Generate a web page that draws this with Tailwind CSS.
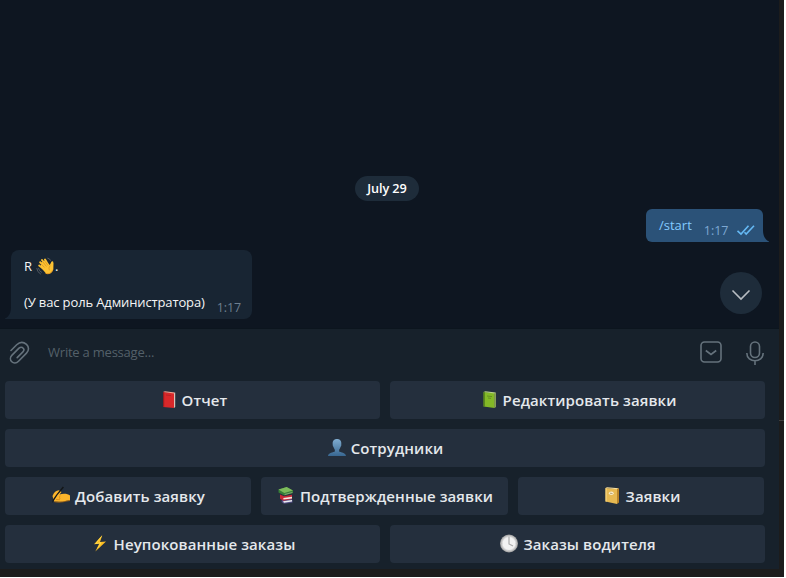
<!DOCTYPE html>
<html lang="ru">
<head>
<meta charset="utf-8">
<title>Chat</title>
<script src="https://cdn.jsdelivr.net/npm/@tailwindcss/browser@4"></script>
</head>
<body class="h-[578px] w-[786px] overflow-hidden bg-white font-['Open_Sans','Noto_Sans',sans-serif]">
<div class="relative h-[577px] w-[784px] bg-[#1c1c1c]">
  <div class="absolute top-[420px] right-0 h-px w-[5px] bg-[#3f3f3f]"></div>
  <div class="flex h-[569px] w-[779px] flex-col bg-[#17212b]">
    <main class="relative flex h-[328px] flex-none flex-col bg-[#0e1621] pt-[176px] text-[13px] text-[#f5f5f5]">
      <div class="ml-[355px] flex h-[25px] w-16 items-center justify-center rounded-full bg-[#1e2c3a] text-[12.7px] font-semibold tracking-[-0.1px] text-white">July 29</div>
      <div class="relative mt-2 ml-[646px] flex h-[33px] w-[117px] rounded-md rounded-br-none bg-[#2b5278] pl-[13px]">
        <span class="mt-[7px] leading-[18px] text-[#83caff]">/start</span>
        <span class="mt-[13px] ml-[12px] text-[12.5px] leading-[18px] text-[#7da8d3]">1:17</span>
        <svg class="absolute top-[15px] left-[90px]" width="19" height="12" fill="none" stroke="#65b9f4" stroke-width="1.6"><path d="M1.5 6.8 5 10 12.5 1.8M8.5 8.2 10.2 10 18 1.8"/></svg>
        <svg class="absolute bottom-0 -right-[6px]" width="6" height="12" fill="#2b5278"><path d="M0 0C0 6 2 9.5 6 11.5V12H0Z"/></svg>
      </div>
      <div class="relative mt-2 ml-[11px] h-[69px] w-[241px] rounded-lg rounded-bl-none bg-[#182533] px-[13px] pt-[7px] leading-[18px]">
        <svg class="absolute bottom-0 -left-[6px]" width="6" height="12" fill="#182533"><path d="M6 0C6 6 4 9.5 0 11.5V12H6Z"/></svg>
        <div class="flex h-9">
          <span class="w-3">R</span>
          <svg class="h-[19px] w-[19px]" viewBox="0 0 19 19" fill="none" stroke-linecap="round">
            <path d="M5 10.5 10 16.5Q15 18 17 13L17.3 6 15.3 5 13.8 8 8.5 3.5 5 6Z" fill="#fcc233"/>
            <path d="M9.5 11 4.2 5.3M11 9.5 6 3M12.5 8.5 9 2.6M9 13 3.2 8.5M16.3 5.2V12" stroke="#fcc233" stroke-width="2"/>
            <path d="M8.3 10.2 5 6.8M10.2 9.2 7 5M11.8 8.2 9.3 4.8M14 8.8Q12 11 13.2 13" stroke="#ce8818" stroke-width=".6"/>
            <path d="M10 16.5Q14.5 18 16.8 13" stroke="#e99b20" stroke-width="1"/>
            <path d="M11.8 1.2Q14 1.5 14.5 3.4M.8 11.5Q1 15 4.5 17M2.5 11.5Q3 14 5.5 15.3" stroke="#596066" stroke-width=".9"/>
          </svg><span>.</span>
        </div>
        <div class="flex tracking-[-0.13px] whitespace-nowrap"><span>(У вас роль Администратора)</span></div>
        <span class="absolute right-[11px] bottom-[2px] text-[12.5px] tracking-[-0.1px] text-[#6d7f8f]">1:17</span>
      </div>
      <div class="absolute top-[272px] left-[720px] flex size-[42px] items-center justify-center rounded-full bg-[#1e2c3a]">
        <svg class="mt-[3px]" width="20" height="12" fill="none" stroke="#b8bdc2" stroke-width="1.6"><path d="m1.5 1.5 8.5 8.5 8.5-8.5"/></svg>
      </div>
    </main>
    <div class="flex h-[53px] flex-none items-center border-t border-[#0c151e] pl-[8px] text-[#65727c]">
      <svg class="mt-[-4px]" width="22" height="24" fill="none" stroke="currentColor" stroke-width="1.6" stroke-linecap="round"><path d="M3 9.5 8.7 3.8C12 .6 15.8 1 18.5 3.4 21.2 6 21.1 9.5 18.5 12.1L10.5 20.2C8.2 22.5 5.5 22.5 3.8 20.8 2 19 2.1 16.2 3.8 14.4L11 7.2C12.5 5.8 14.2 6 15.2 7.2 16.3 8.4 16 9.8 14.9 10.9L9.2 16.6"/></svg>
      <span class="mt-[-5px] ml-[18px] w-[652px] text-[13px] tracking-[-0.22px] text-[#546069]">Write a message...</span>
      <svg class="mt-[-6px]" width="22" height="22" fill="none" stroke="currentColor" stroke-width="1.6"><rect x="1" y="1" width="20" height="20" rx="3.5"/><path d="m5.8 9.5 5.2 4 5.2-4"/></svg>
      <svg class="mt-[-4px] ml-[24px]" width="20" height="24" fill="none" stroke="currentColor" stroke-width="1.6"><rect x="4.5" y="1" width="9" height="15.5" rx="4.5"/><path d="M.8 12C.8 22.3 17.2 22.3 17.2 12M9 19.8V24"/></svg>
    </div>
    <div class="flex flex-col gap-[10px] pl-[5px] text-[15px] font-semibold tracking-[0.1px] whitespace-nowrap text-[#e4e8ec] *:flex *:h-[38px] *:gap-[10px]">
      <div class="*:flex *:w-[375px] *:items-center *:justify-center *:gap-1 *:rounded *:bg-[#242f3d]">
        <div><svg class="size-5" viewBox="0 0 20 20"><path d="m5 2 11 1.1V18L5 17Z" fill="#d9282a"/><path d="m5 2 2-.7 10 1.2-1 .9Z" fill="#f3a08f"/><path d="M16 3.2 17.2 2.5V17L16 18Z" fill="#d9c4b9"/><path d="M5 2 6.2 2.3V17L5 16.8Z" fill="#991c20"/><path d="m8 5 5 .6" stroke="#ad2024" stroke-width=".7"/></svg><span>Отчет</span></div>
        <div><svg class="size-5" viewBox="0 0 20 20"><path d="m4.5 2 11 1.1V18L4.5 16.4Z" fill="#83b827"/><path d="m4.5 2 2-.7 10.3 1.2-1.3.9Z" fill="#bad389"/><path d="M15.5 3.2 16.8 2.5V17L15.5 18Z" fill="#a3bb63"/><path d="M4.5 2 5.7 2.3V16.7L4.5 16.4Z" fill="#49721c"/><path d="m8 6 5 .6M9 8l3 .4" stroke="#587e20" stroke-width=".7"/></svg><span>Редактировать заявки</span></div>
      </div>
      <div class="*:flex *:w-[760px] *:items-center *:justify-center *:gap-1 *:rounded *:bg-[#242f3d]">
        <div><svg class="size-5" viewBox="0 0 20 20"><defs><linearGradient id="person" x1="0" y1="0" x2="0" y2="1"><stop stop-color="#80acd0"/><stop offset="1" stop-color="#386791"/></linearGradient></defs><path d="M10 1C6.8 1 5.4 3.2 5.7 6.2 5.5 7.5 6.2 8.3 6.5 9 7 10.7 7.7 11.3 7.9 12L7.7 13.7C4 14.7 1.4 15.2 1 18H19C18.6 15.2 16 14.7 12.3 13.7L12.1 12C12.5 11 13 10.7 13.5 9 14.2 8.1 14.5 7.2 14.3 6.2 14.6 3.2 13.2 1 10 1Z" fill="url(#person)"/></svg><span>Сотрудники</span></div>
      </div>
      <div class="*:flex *:w-[246px] *:items-center *:justify-center *:gap-1 *:rounded *:bg-[#242f3d]">
        <div><svg class="size-5" viewBox="0 0 20 20"><path d="M1.5 10C3 6 5 4.3 8 4.2L10.5 6 8.5 8.5C13 7.2 17 8 19 9.5V14.5C15 14 12.5 16.2 9 15.8L3 15.4Z" fill="#fcb52b"/><path d="M9 13Q8 11.5 9 9.5M5 13.5 9 13.7" stroke="#c97b13" stroke-width=".6" fill="none"/><path d="M3.5 15.8Q8 17 12 15.8L19 14.5" stroke="#a9660e" stroke-width=".7" fill="none"/><path d="M11.8.6 13 1.4 6.5 9 3 14.5 1.2 17 1.6 14 5.2 8.8Z" fill="#141719"/></svg><span>Добавить заявку</span></div>
        <div class="!w-[247px]"><svg class="size-5" viewBox="0 0 20 20"><path d="M6 13.5 15 12 16.5 14.5V16.5L8 17.8 5.5 16Z" fill="#514e87"/><path d="m7 15.3 9-1.2v1.4l-8 1.2Z" fill="#ececf0"/><path d="M4 8.5 8 10.3 16 8.8V13L7.5 14.7 4 12.7Z" fill="#c92937"/><path d="m7.3 11.9 8.7-1.2V12.4l-8.5 1.2Z" fill="#f5e6df"/><path d="m2.5 3.5 8.2-2.5L17 4.7V7L8.3 9.5 2.5 6.5Z" fill="#377d38"/><path d="m2.5 3.5 8.2-2.5L17 4.5 8.3 7Z" fill="#7dbb5b"/><path d="m8.5 8 7.8-2V7.1l-7.5 2Z" fill="#7fa773"/></svg><span>Подтвержденные заявки</span></div>
        <div><svg class="size-5" viewBox="0 0 20 20"><path d="m3.5 2 11.5 1V18L3.5 15.6Z" fill="#e6b952"/><path d="m3.5 2 1.5-.7 12 1-2 .9Z" fill="#f9df9c"/><path d="M15 3 17 2.3V16.5L15 18Z" fill="#b98429"/><path d="m3.5 2 1.2.2v13.5L3.5 15.6Z" fill="#f5d37e"/><ellipse cx="9.3" cy="7.3" rx="2.4" ry="1.7" fill="#f8edcd"/><path d="m8 7.2 2.5.3" stroke="#a38a56" stroke-width=".8"/></svg><span>Заявки</span></div>
      </div>
      <div class="*:flex *:w-[375px] *:items-center *:justify-center *:gap-1 *:rounded *:bg-[#242f3d]">
        <div><svg class="size-5" viewBox="0 0 20 20"><path d="M12.3 1 4 10.3 9.2 9.7 5.3 17.4 16 7.5 10 8.1Z" fill="#fcbd23"/><path d="m11.5 2.5-5.7 7 5.2-.8-3.2 5.3" fill="none" stroke="#ffe45a" stroke-width=".7"/></svg><span>Неупокованные заказы</span></div>
        <div><svg class="size-5" viewBox="0 0 20 20"><defs><radialGradient id="clock"><stop offset=".65" stop-color="#f2f2f2"/><stop offset="1" stop-color="#999"/></radialGradient></defs><circle cx="10" cy="9.5" r="9" fill="url(#clock)"/><path d="M10 3V10L14 12" stroke="#aaa" stroke-width="1.2" fill="none"/><path d="M10 1.7v1M10 16.3v1M2.2 9.5h1M16.8 9.5h1" stroke="#bbb"/></svg><span>Заказы водителя</span></div>
      </div>
    </div>
  </div>
</div>
</body>
</html>
